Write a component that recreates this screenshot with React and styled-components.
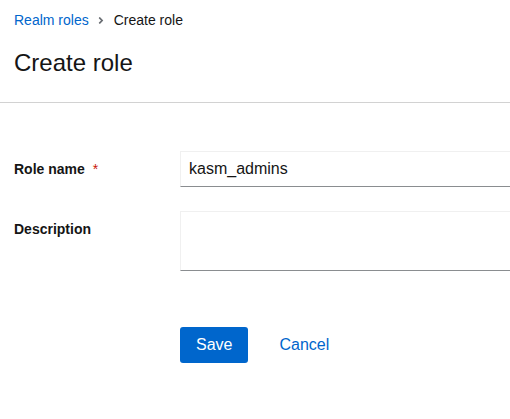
import React from 'react'
import styled, { createGlobalStyle } from 'styled-components'

const GlobalStyle = createGlobalStyle`
  html, body {
    margin: 0;
    padding: 0;
    background: #fff;
    font-family: "Liberation Sans", Arial, sans-serif;
    color: #151515;
  }
  * { box-sizing: border-box; }
`

const Page = styled.div`
  width: 100%;
  overflow: hidden;
`

const Header = styled.section`
  padding: 10px 14px 23px;
  border-bottom: 1px solid #d2d2d2;
`

const Breadcrumb = styled.nav`
  display: flex;
  align-items: center;
  gap: 10px;
  font-size: 14px;
  line-height: 21px;
`

const Crumb = styled.a`
  color: #06c;
  text-decoration: none;
`

const Current = styled.span`
  color: #151515;
`

const Chevron = styled.svg`
  width: 8px;
  height: 11px;
  margin: 0 -1px 0 -2px;
  fill: #6a6e73;
`

const Title = styled.h1`
  margin: 16px 0 0;
  font-size: 24px;
  font-weight: 400;
  line-height: 32px;
`

const Form = styled.form`
  padding: 48px 0 0 14px;
  display: grid;
  grid-template-columns: 150px 1fr;
  column-gap: 16px;
  row-gap: 24px;
`

const Label = styled.label`
  padding-top: 8px;
  font-size: 14px;
  font-weight: 700;
  line-height: 21px;
`

const Required = styled.span`
  color: #c9190b;
  margin-left: 8px;
  font-weight: 400;
`

const Control = styled.input`
  display: block;
  width: 100%;
  height: 36px;
  padding: 6px 8px;
  font: inherit;
  font-size: 16px;
  color: #151515;
  border: 1px solid #f0f0f0;
  border-bottom-color: #8a8d90;
  border-right: 0;
  outline: none;
  background: #fff;
`

const Area = styled.textarea`
  display: block;
  width: 100%;
  height: 60px;
  padding: 6px 8px;
  font: inherit;
  font-size: 16px;
  border: 1px solid #f0f0f0;
  border-bottom-color: #8a8d90;
  border-right: 0;
  outline: none;
  resize: none;
`

const Actions = styled.div`
  grid-column: 2;
  display: flex;
  gap: 15px;
  margin-top: 32px;
`

const Button = styled.button`
  height: 36px;
  padding: 0 16px;
  font: inherit;
  font-size: 16px;
  border: 0;
  border-radius: 3px;
  cursor: pointer;
  background: ${p => (p.$primary ? '#06c' : 'transparent')};
  color: ${p => (p.$primary ? '#fff' : '#06c')};
`

export default function App() {
  return (
    <Page>
      <GlobalStyle />
      <Header>
        <Breadcrumb>
          <Crumb href="#">Realm roles</Crumb>
          <Chevron viewBox="0 0 256 512">
            <path d="M224.3 273l-136 136c-9.4 9.4-24.6 9.4-33.9 0l-22.6-22.6c-9.4-9.4-9.4-24.6 0-33.9l96.4-96.4-96.4-96.4c-9.4-9.4-9.4-24.6 0-33.9L54.3 103c9.4-9.4 24.6-9.4 33.9 0l136 136c9.5 9.4 9.5 24.6.1 34z" />
          </Chevron>
          <Current>Create role</Current>
        </Breadcrumb>
        <Title>Create role</Title>
      </Header>
      <Form onSubmit={e => e.preventDefault()}>
        <Label htmlFor="name">
          Role name<Required>*</Required>
        </Label>
        <Control id="name" defaultValue="kasm_admins" />
        <Label htmlFor="desc">Description</Label>
        <Area id="desc" />
        <Actions>
          <Button $primary type="submit">Save</Button>
          <Button type="button">Cancel</Button>
        </Actions>
      </Form>
    </Page>
  )
}
